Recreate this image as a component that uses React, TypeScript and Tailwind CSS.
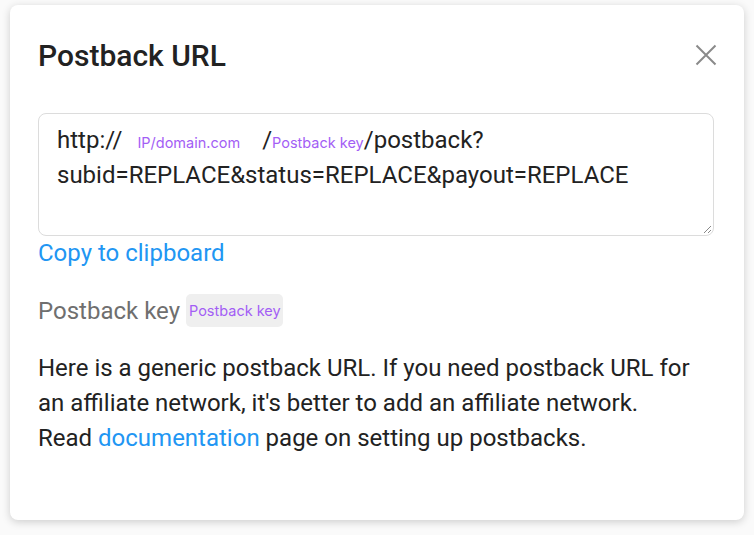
import React from "react";

export default function App() {
  return (
    <div className="w-[754px] h-[535px] bg-[#fafafa] pt-[5px] px-[10px]" style={{ fontFamily: "Roboto, sans-serif" }}>
      <div className="w-[734px] h-[515px] bg-white rounded-[8px] shadow-[0_2px_8px_rgba(0,0,0,0.18)] px-[28px] pt-[30px]">
        <div className="flex items-start justify-between">
          <h1 className="text-[30px] leading-[40px] font-medium text-[#222] mt-[1px] mb-[-2px]">Postback URL</h1>
          <button className="mt-[9px] mr-[-1px] text-[#8a8a8a]">
            <svg width="22" height="22" viewBox="0 0 22 22" fill="none" stroke="currentColor" strokeWidth="2">
              <path d="M1.5 1.5 L20.5 20.5 M20.5 1.5 L1.5 20.5" />
            </svg>
          </button>
        </div>
        <div className="mt-[39px] relative w-[676px] h-[123px] border border-[#dcdcdc] rounded-[8px] pl-[18px] pr-[14px] pt-[10px] text-[24px] leading-[33px] text-[#222]">
          <span>http://</span>
          <span className="inline-block text-[14.5px] text-[#a35ef5] px-[15px] align-baseline" style={{ fontFamily: "Inter, sans-serif" }}>IP/domain.com</span>
          <span className="ml-[7px]">/</span>
          <span className="text-[14.5px] text-[#a35ef5]" style={{ fontFamily: "Inter, sans-serif" }}>Postback key</span>
          <span>/postback?</span>
          <br />
          <span>subid=REPLACE&amp;status=REPLACE&amp;payout=REPLACE</span>
          <svg className="absolute right-[1px] bottom-[1px]" width="10" height="10" viewBox="0 0 10 10" stroke="#888" strokeWidth="1">
            <path d="M9 2 L2 9 M9 6 L6 9" />
          </svg>
        </div>
        <div className="mt-[2px] text-[24px] leading-[30px] text-[#2196f3]">Copy to clipboard</div>
        <div className="mt-[26px] flex items-center">
          <span className="text-[24px] leading-[32px] text-[#6f6f6f]">Postback key</span>
          <span className="ml-[6px] h-[33px] pl-[3px] pr-[2px] rounded-[5px] bg-[#efefef] text-[14.5px] leading-[33px] text-[#a35ef5]" style={{ fontFamily: "Inter, sans-serif" }}>Postback key</span>
        </div>
        <p className="mt-[24px] text-[24px] leading-[35px] text-[#222] w-[666px]">
          Here is a generic postback URL. If you need postback URL for an affiliate network, it's better to add an affiliate network.
          <br />
          Read <span className="text-[#2196f3]">documentation</span> page on setting up postbacks.
        </p>
      </div>
    </div>
  );
}
